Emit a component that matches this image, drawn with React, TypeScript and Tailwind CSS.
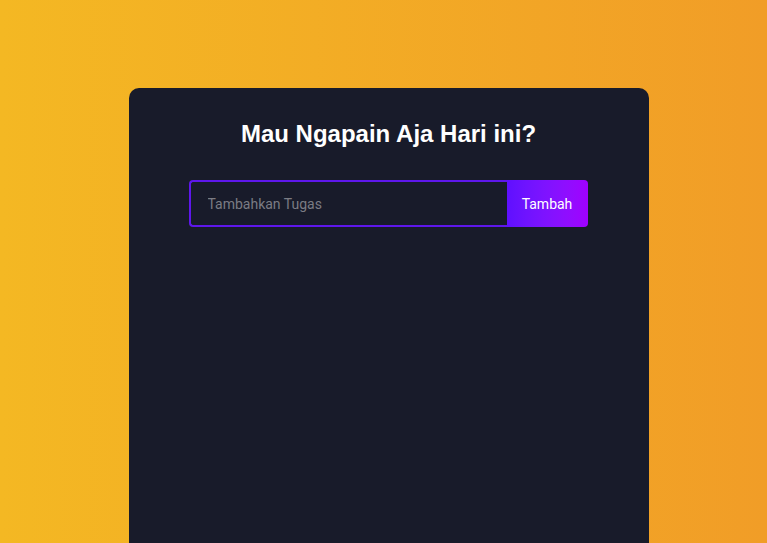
export default function App() {
  return (
    <div className="h-screen w-full overflow-hidden bg-gradient-to-r from-[#f4b823] to-[#f19d27] pt-[88px] pl-[10px] font-['Roboto',sans-serif]">
      <div className="mx-auto min-h-[600px] w-[520px] rounded-[10px] bg-[#181b2a] px-[60px] pt-[30px]">
        <h1 className="text-center font-['Liberation_Sans',Arial,sans-serif] text-2xl leading-8 font-bold text-white">
          Mau Ngapain Aja Hari ini?
        </h1>
        <form className="mt-[30px] flex h-[47px] w-[399px]" onSubmit={(e) => e.preventDefault()}>
          <input
            type="text"
            placeholder="Tambahkan Tugas"
            autoFocus
            className="h-full flex-1 rounded-l-[4px] border-2 border-r-0 border-[#5e17eb] bg-transparent pl-[17px] text-sm text-white caret-white outline-none placeholder:text-[#7b7c84]"
          />
          <button
            type="submit"
            className="h-full w-[81px] rounded-r-[4px] bg-gradient-to-r from-[#5f10ff] to-[#a000ff] text-sm text-white"
          >
            Tambah
          </button>
        </form>
      </div>
    </div>
  )
}
